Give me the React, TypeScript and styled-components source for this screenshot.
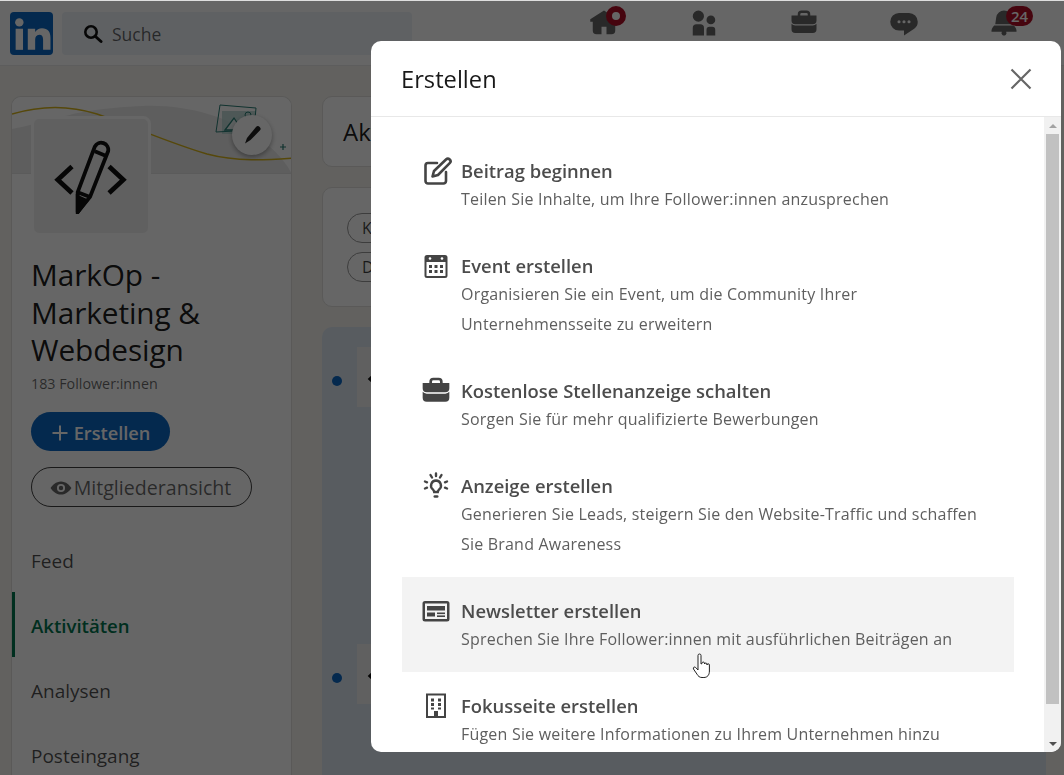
import React from "react";
import styled, { createGlobalStyle } from "styled-components";

const Global = createGlobalStyle`
  html, body { margin: 0; padding: 0; height: 775px; overflow: hidden; background: #f4f2ee; }
  body { font-family: "Open Sans", "Noto Sans", "Liberation Sans", sans-serif; color: rgba(0,0,0,.9); }
  * { box-sizing: border-box; }
`;

const paths = {
  home: "M23 9v2h-2v7a3 3 0 01-3 3h-4v-6h-4v6H6a3 3 0 01-3-3v-7H1V9l11-7 5 3.18V2h3v5.09z",
  people: "M12 16v6H3v-6a3 3 0 013-3h3a3 3 0 013 3zm5.5-3A3.5 3.5 0 1014 9.5a3.5 3.5 0 003.5 3.5zm1 2h-2a2.5 2.5 0 00-2.5 2.5V22h7v-4.5a2.5 2.5 0 00-2.5-2.5zM7.5 2A4.5 4.5 0 1012 6.5 4.49 4.49 0 007.5 2z",
  jobs: "M17 6V5a3 3 0 00-3-3h-4a3 3 0 00-3 3v1H2v4a3 3 0 003 3h14a3 3 0 003-3V6zM9 5a1 1 0 011-1h4a1 1 0 011 1v1H9zm10 9a4 4 0 003-1.38V17a3 3 0 01-3 3H5a3 3 0 01-3-3v-4.38A4 4 0 005 14z",
  chat: "M16 4H8a7 7 0 000 14h4v4l8.16-5.39A6.78 6.78 0 0023 11a7 7 0 00-7-7zm-8 8.25A1.25 1.25 0 119.25 11 1.25 1.25 0 018 12.25zm4 0A1.25 1.25 0 1113.25 11 1.25 1.25 0 0112 12.25zm4 0A1.25 1.25 0 1117.25 11 1.25 1.25 0 0116 12.25z",
  bell: "M22 19h-8.28a2 2 0 11-3.44 0H2v-1a4.52 4.52 0 011.17-2.83l1-1.17h15.7l1 1.17A4.42 4.42 0 0122 18zM18.21 7.44A6.27 6.27 0 0012 2a6.27 6.27 0 00-6.21 5.44L5 13h14z",
};

const TopEdge = styled.div`
  position: fixed; top: 0; left: 0; right: 0; height: 1px; background: #dedede; z-index: 30;
`;
const Page = styled.div`
  width: 1064px; height: 775px; overflow: hidden; display: flex; flex-direction: column;
`;
const Header = styled.header`
  height: 66px; flex: none; background: #fff; display: flex; align-items: flex-start;
  padding: 12px 10px 0; border-bottom: 1px solid #e8e8e8;
`;
const Logo = styled.div`
  width: 43px; height: 43px; border-radius: 4px; background: #0a66c2; color: #fff; flex: none;
  display: flex; align-items: center; justify-content: center;
`;
const Search = styled.div`
  width: 350px; height: 43px; margin-left: 9px; border-radius: 4px; background: #edf3f8;
  display: flex; align-items: center; padding-left: 21px; gap: 9px; font-size: 17.5px; color: rgba(0,0,0,.6);
`;
const NavIcons = styled.nav`
  margin-left: auto; display: flex; margin-top: -4px;
`;
const NavItem = styled.div`
  width: 100px; height: 30px; display: flex; justify-content: center; position: relative; color: rgba(0,0,0,.6);
`;
const Badge = styled.span`
  position: absolute; top: -2px; left: 52px; min-width: 27px; height: 20px; padding: 0 4px; border-radius: 10px;
  background: #b00e26; color: #fff; font-size: 15px; font-weight: 600; line-height: 20px; text-align: center;
`;
const RingDot = styled.span`
  position: absolute; top: -2px; left: 52px; width: 20px; height: 20px; border-radius: 50%;
  border: 6px solid #b00e26; background: #fff;
`;
const Body = styled.div`
  flex: 1; min-height: 0; display: flex; gap: 30px; padding: 30px 18px 0 11px;
`;
const Sidebar = styled.aside`
  width: 281px; flex: none; height: 760px; background: #fff; border: 1px solid #e0dfdc; border-bottom: 0;
  border-radius: 10px 10px 0 0; display: flex; flex-direction: column;
`;
const Cover = styled.div`
  height: 77px; flex: none; position: relative; border-bottom: 1px solid #e4e4e4;
  border-radius: 9px 9px 0 0; overflow: hidden; background: #fff;
`;
const EditCircle = styled.div`
  position: absolute; left: 220px; top: 18px; width: 40px; height: 40px; border-radius: 50%; background: #fff;
  box-shadow: 0 2px 5px rgba(0,0,0,.35); display: flex; align-items: center; justify-content: center; color: #222; z-index: 2;
`;
const CoverWrap = styled.div`
  position: relative;
`;
const LogoBox = styled.div`
  width: 120px; height: 120px; margin: -58px 0 0 19px; position: relative; z-index: 1; background: #f1f1f1;
  border: 3px solid #fff; border-radius: 8px; display: flex; align-items: center; justify-content: center;
`;
const Name = styled.h1`
  margin: 20px 0 0 19px; font-size: 29.8px; line-height: 37.5px; font-weight: 500; width: 220px; letter-spacing: -.1px;
`;
const Followers = styled.div`
  margin: 5px 0 0 19px; font-size: 14.3px; line-height: 20px; color: rgba(0,0,0,.6);
`;
const PrimaryBtn = styled.div`
  margin: 18px 0 0 19px; width: 139px; height: 39px; border-radius: 20px; background: #0a66c2; color: #fff;
  display: flex; align-items: center; justify-content: center; gap: 5px; font-size: 18.2px; font-weight: 600; padding-top: 3px;
`;
const OutlineBtn = styled.div`
  margin: 16px 0 0 19px; width: 221px; height: 40px; border-radius: 20px; border: 1px solid rgba(0,0,0,.75);
  color: rgba(0,0,0,.6); display: flex; align-items: center; justify-content: center; gap: 2px; font-size: 19.6px; font-weight: 500; padding: 2px 2px 0 0;
`;
const SideNav = styled.div`
  margin-top: 20px; display: flex; flex-direction: column;
`;
const SideLink = styled.div<{ $active?: boolean }>`
  height: 65px; display: flex; align-items: center; padding-left: ${p => (p.$active ? "16px" : "19px")};
  padding-top: 3px; font-size: ${p => (p.$active ? "18.6px" : "19px")}; font-weight: ${p => (p.$active ? 600 : 500)};
  color: ${p => (p.$active ? "#01754f" : "rgba(0,0,0,.7)")};
  border-left: ${p => (p.$active ? "3px solid #01754f" : "0")};
`;
const Main = styled.main`
  flex: 1; display: flex; flex-direction: column; gap: 20px;
`;
const Card = styled.section`
  background: #fff; border: 1px solid #e0dfdc; border-radius: 10px;
`;
const TitleCard = styled(Card)`
  height: 71px; display: flex; align-items: center; padding-left: 20px; font-size: 24px;
`;
const FilterCard = styled(Card)`
  height: 120px; padding: 25px 24px; display: flex; flex-direction: column; gap: 9px;
`;
const Pill = styled.div`
  width: 130px; height: 30px; border: 1px solid #999; border-radius: 15px; padding-left: 14px; font-size: 16px; line-height: 28px; color: rgba(0,0,0,.75);
`;
const Feed = styled.section`
  flex: 1; background: #dce6f1; border-radius: 10px 10px 0 0; padding: 20px 0 0 10px; display: flex; flex-direction: column; gap: 237px;
`;
const FeedRow = styled.div`
  display: flex; align-items: center; gap: 15px; height: 60px;
`;
const UnreadDot = styled.span`
  width: 10px; height: 10px; border-radius: 50%; background: #0a66c2; margin-top: 8px;
`;
const Thumb = styled.div`
  width: 60px; height: 60px; background: #f1f1f1; display: flex; align-items: center; justify-content: center;
`;
const Dim = styled.div`
  position: fixed; inset: 0; background: rgba(0,0,0,.6); z-index: 10;
`;
const Modal = styled.div`
  position: fixed; left: 371px; top: 41px; width: 690px; height: 711px; background: #fff; border-radius: 10px; z-index: 20;
  display: flex; flex-direction: column; overflow: hidden;
`;
const ModalHead = styled.div`
  height: 76px; flex: none; border-bottom: 1px solid #e8e8e8; display: flex; align-items: center; justify-content: space-between;
  padding: 1px 29px 0 30px;
`;
const ModalTitle = styled.h2`
  margin: 0; font-size: 23.7px; font-weight: 500; color: rgba(0,0,0,.9);
`;
const ModalBody = styled.div`
  flex: 1; min-height: 0; display: flex;
`;
const List = styled.div`
  flex: 1; min-width: 0; overflow: hidden; padding: 20px 30px 0 31px;
`;
const Item = styled.div<{ $hover?: boolean }>`
  display: flex; gap: 9px; padding: 21px 0 18px 18px; background: ${p => (p.$hover ? "#f3f3f3" : "transparent")}; position: relative;
`;
const IconBox = styled.div`
  width: 32px; height: 32px; flex: none; margin-top: -3px; color: #444;
`;
const ItemTitle = styled.div`
  font-size: 18.4px; line-height: 26px; font-weight: 600; color: #4c4c4c; white-space: nowrap;
`;
const ItemDesc = styled.div`
  font-size: 16px; line-height: 30px; color: #5e5e5e; letter-spacing: .2px; white-space: nowrap;
`;
const Scrollbar = styled.div`
  width: 17px; flex: none; background: #f1f1f1; display: flex; flex-direction: column; align-items: center;
`;
const ScrollBtn = styled.div`
  height: 17px; flex: none; display: flex; align-items: center; justify-content: center;
`;
const Arrow = styled.span<{ $down?: boolean }>`
  width: 0; height: 0; border-left: 4px solid transparent; border-right: 4px solid transparent;
  ${p => (p.$down ? "border-top: 4px solid #505050;" : "border-bottom: 4px solid #a3a3a3;")}
`;
const Thumbbar = styled.div`
  width: 13px; height: 570px; flex: none; background: #c1c1c1;
`;
const Track = styled.div`
  flex: 1;
`;
const Cursor = styled.svg`
  position: absolute; left: 290px; top: 76px; width: 20px; height: 26px;
`;

const Icon = ({ d, size = 30 }: { d: string; size?: number }) => (
  <svg width={size} height={size} viewBox="0 0 24 24" fill="currentColor"><path d={d} /></svg>
);

const Compose = () => (
  <svg width="32" height="32" viewBox="0 0 32 32" fill="none" stroke="currentColor" strokeWidth="2.6" strokeLinecap="round" strokeLinejoin="round">
    <path d="M17 8H8a2.500 2.500 0 0 0-2.500 2.500V26A2.500 2.500 0 0 0 8 28.500h15.500A2.500 2.500 0 0 0 26 26v-9" />
    <path d="M26 4.500a2.600 2.600 0 0 1 3.700 3.700L18 20l-5.500 1.500L14 16z" />
  </svg>
);
const Calendar = () => (
  <svg width="32" height="32" viewBox="0 0 32 32" fill="currentColor">
    <path fillRule="evenodd" d="M7 5h18a2.500 2.500 0 0 1 2.500 2.500v18A2.500 2.500 0 0 1 25 28H7a2.500 2.500 0 0 1-2.500-2.500v-18A2.500 2.500 0 0 1 7 5zM6.500 12v13.500a.5.5 0 0 0 .5.500h18a.5.5 0 0 0 .5-.5V12z" />
    <circle cx="10" cy="8.500" r="1.300" fill="#fff" /><circle cx="22" cy="8.500" r="1.300" fill="#fff" />
    <rect x="9" y="15" width="3" height="3" /><rect x="14.500" y="15" width="3" height="3" /><rect x="20" y="15" width="3" height="3" />
    <rect x="9" y="20" width="3" height="3" /><rect x="14.500" y="20" width="3" height="3" /><rect x="20" y="20" width="3" height="3" />
  </svg>
);
const Bulb = () => (
  <svg width="32" height="32" viewBox="0 0 32 32" fill="none" stroke="currentColor" strokeWidth="2.400" strokeLinecap="round">
    <path d="M16 10.500a5 5 0 0 0-3.200 8.800c.9.800 1.200 1.500 1.400 2.700h3.600c.2-1.200.5-1.900 1.400-2.700A5 5 0 0 0 16 10.500z" />
    <path d="M14.800 26.500h2.400" strokeWidth="2.600" />
    <path d="M16 3.500v2.500M10.500 5l1.500 2.500M21.500 5L20 7.500M5 11.500l2 .8M5 18.500l2-.8M27 11.500l-2 .8M27 18.500l-2-.8" />
  </svg>
);
const News = () => (
  <svg width="32" height="32" viewBox="0 0 32 32" fill="currentColor">
    <path fillRule="evenodd" d="M5 6h22a2.500 2.500 0 0 1 2.500 2.500V24a2.500 2.500 0 0 1-2.500 2.500H5A2.500 2.500 0 0 1 2.500 24V8.500A2.500 2.500 0 0 1 5 6zm0 2.500V24h22V8.500z" />
    <rect x="7" y="11" width="18" height="4.500" /><rect x="7" y="17.500" width="8" height="4" /><rect x="17" y="17.500" width="8" height="1.600" /><rect x="17" y="20.400" width="8" height="1.600" />
  </svg>
);
const Building = () => (
  <svg width="32" height="32" viewBox="0 0 32 32" fill="currentColor">
    <path fillRule="evenodd" d="M6 3.500h20V28H6zM8 5.500v20.500h6V21h4v5h6V5.500z" />
    <rect x="11" y="8.500" width="3" height="3" /><rect x="18" y="8.500" width="3" height="3" />
    <rect x="11" y="13" width="3" height="3" /><rect x="18" y="13" width="3" height="3" />
    <rect x="11" y="17.500" width="3" height="2" /><rect x="18" y="17.500" width="3" height="2" />
  </svg>
);
const MarkLogo = ({ s = 76 }: { s?: number }) => (
  <svg width={s} height={s} viewBox="0 0 80 80" fill="none" stroke="#111" strokeWidth="4">
    <path d="M20 30 L5 44 L20 58" strokeWidth="5" />
    <path d="M59 30 L74 44 L59 58" strokeWidth="5" />
    <path d="M26 78 L26 57 L44 9 a7.500 7.500 0 0 1 14 5 L39 62 Z" strokeLinejoin="round" />
    <path d="M26 57 L39 62 M44 14 L56 19" />
    <path d="M26 78 L26 62 L35 66 Z" fill="#111" />
  </svg>
);
const CoverArt = () => (
  <svg width="281" height="77" viewBox="0 0 281 77" fill="none">
    <path d="M0 32C50 22 60 12 130 9c70-3 130 30 150 68H0z" fill="#ececec" />
    <path d="M0 17C30 8 60 9 85 17c40 14 70 28 110 40 30 8 60 6 86 4" stroke="#d7b41c" strokeWidth="1.500" />
    <rect x="210" y="14" width="34" height="23" fill="#a9cfca" opacity=".7" />
    <path d="M208 8l36 3-2 22-38 2z" stroke="#2a7d75" strokeWidth="1" />
    <path d="M213 33l9-12 8 12z" stroke="#2a7d75" strokeWidth="1.300" fill="#e8f2f1" />
    <circle cx="236" cy="18" r="3" stroke="#2a7d75" />
    <path d="M268 50h6M271 47v6" stroke="#2a7d75" strokeWidth="1.200" />
  </svg>
);

const items = [
  { icon: <Compose />, title: "Beitrag beginnen", desc: ["Teilen Sie Inhalte, um Ihre Follower:innen anzusprechen"] },
  { icon: <Calendar />, title: "Event erstellen", desc: ["Organisieren Sie ein Event, um die Community Ihrer", "Unternehmensseite zu erweitern"] },
  { icon: <Icon d={paths.jobs} size={32} />, title: "Kostenlose Stellenanzeige schalten", desc: ["Sorgen Sie für mehr qualifizierte Bewerbungen"] },
  { icon: <Bulb />, title: "Anzeige erstellen", desc: ["Generieren Sie Leads, steigern Sie den Website-Traffic und schaffen", "Sie Brand Awareness"] },
  { icon: <News />, title: "Newsletter erstellen", desc: ["Sprechen Sie Ihre Follower:innen mit ausführlichen Beiträgen an"], hover: true },
  { icon: <Building />, title: "Fokusseite erstellen", desc: ["Fügen Sie weitere Informationen zu Ihrem Unternehmen hinzu"] },
];

export default function App() {
  return (
    <>
      <Global />
      <TopEdge />
      <Page>
        <Header>
          <Logo>
            <svg width="38" height="38" viewBox="0 0 36 36" fill="currentColor">
              <circle cx="6" cy="7" r="4" /><rect x="2.500" y="13" width="7" height="20" />
              <path d="M14 13h7v3c1.300-2.200 3.700-3.500 6.500-3.500 5.500 0 8 3.300 8 9V33h-7V23.500c0-3-1-4.800-3.600-4.800-2.700 0-3.900 2-3.900 4.800V33h-7z" />
            </svg>
          </Logo>
          <Search>
            <svg width="20" height="20" viewBox="0 0 20 20" fill="none" stroke="#111" strokeWidth="2.600" strokeLinecap="round">
              <circle cx="8" cy="8" r="5.700" /><path d="M12.500 12.500L18 17.500" strokeWidth="3" />
            </svg>
            Suche
          </Search>
          <NavIcons>
            <NavItem><Icon d={paths.home} /><RingDot /></NavItem>
            <NavItem><Icon d={paths.people} /></NavItem>
            <NavItem><Icon d={paths.jobs} /></NavItem>
            <NavItem><Icon d={paths.chat} /></NavItem>
            <NavItem><Icon d={paths.bell} /><Badge>24</Badge></NavItem>
          </NavIcons>
        </Header>
        <Body>
          <Sidebar>
            <CoverWrap>
              <Cover><CoverArt /></Cover>
              <EditCircle>
                <svg width="20" height="20" viewBox="0 0 20 20" fill="currentColor"><path d="M14 2a2.600 2.600 0 0 1 3.800 3.600L8.500 15 3 18.500 5 13z" /></svg>
              </EditCircle>
            </CoverWrap>
            <LogoBox><MarkLogo /></LogoBox>
            <Name>MarkOp - Marketing &amp; Webdesign</Name>
            <Followers>183 Follower:innen</Followers>
            <PrimaryBtn>
              <svg width="18" height="18" viewBox="0 0 18 18" stroke="currentColor" strokeWidth="2"><path d="M9 1.500v15M1.500 9h15" /></svg>
              Erstellen
            </PrimaryBtn>
            <OutlineBtn>
              <svg width="22" height="22" viewBox="0 0 20 20" fill="currentColor">
                <path fillRule="evenodd" d="M10 4c4.500 0 8 3.500 9.500 6-1.500 2.500-5 6-9.500 6s-8-3.500-9.500-6C2 7.500 5.500 4 10 4zm0 2.300a3.700 3.700 0 1 0 0 7.400 3.700 3.700 0 0 0 0-7.400zM10 8a2 2 0 1 1 0 4 2 2 0 0 1 0-4z" />
              </svg>
              Mitgliederansicht
            </OutlineBtn>
            <SideNav>
              <SideLink>Feed</SideLink>
              <SideLink $active>Aktivitäten</SideLink>
              <SideLink>Analysen</SideLink>
              <SideLink>Posteingang</SideLink>
            </SideNav>
          </Sidebar>
          <Main>
            <TitleCard>Aktivität</TitleCard>
            <FilterCard>
              <Pill>Kommentare</Pill>
              <Pill>Dokumente</Pill>
            </FilterCard>
            <Feed>
              <FeedRow><UnreadDot /><Thumb><MarkLogo s={40} /></Thumb></FeedRow>
              <FeedRow><UnreadDot /><Thumb><MarkLogo s={40} /></Thumb></FeedRow>
            </Feed>
          </Main>
        </Body>
      </Page>
      <Dim />
      <Modal>
        <ModalHead>
          <ModalTitle>Erstellen</ModalTitle>
          <svg width="22" height="22" viewBox="0 0 22 22" stroke="#666" strokeWidth="2.200"><path d="M1.500 1.500l19 19M20.500 1.500l-19 19" /></svg>
        </ModalHead>
        <ModalBody>
          <List>
            {items.map(it => (
              <Item key={it.title} $hover={it.hover}>
                <IconBox>{it.icon}</IconBox>
                <div>
                  <ItemTitle>{it.title}</ItemTitle>
                  {it.desc.map(d => <ItemDesc key={d}>{d}</ItemDesc>)}
                </div>
                {it.hover && (
                  <Cursor viewBox="0 0 20 26">
                    <path d="M6 2.500a1.500 1.500 0 0 1 3 0V11l1-.5V10a1.300 1.300 0 0 1 2.500 0v1a1.300 1.300 0 0 1 2.500 0v1a1.200 1.200 0 0 1 2.400 0v6c0 4-2 6.500-5.500 6.500H10c-2.500 0-3.800-1.300-5-3.300L1.500 16c-.8-1.500 1-2.700 2.200-1.500L6 17z" fill="#fff" stroke="#222" strokeWidth="1" strokeLinejoin="round" />
                  </Cursor>
                )}
              </Item>
            ))}
          </List>
          <Scrollbar>
            <ScrollBtn><Arrow /></ScrollBtn>
            <Thumbbar />
            <Track />
            <ScrollBtn><Arrow $down /></ScrollBtn>
          </Scrollbar>
        </ModalBody>
      </Modal>
    </>
  );
}
